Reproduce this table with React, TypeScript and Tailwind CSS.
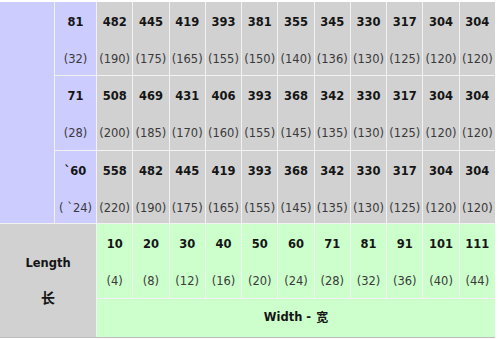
import React from 'react';

const rows = [
  { head: ['81', '(32)'], cells: [['482', '(190)'], ['445', '(175)'], ['419', '(165)'], ['393', '(155)'], ['381', '(150)'], ['355', '(140)'], ['345', '(136)'], ['330', '(130)'], ['317', '(125)'], ['304', '(120)'], ['304', '(120)']] },
  { head: ['71', '(28)'], cells: [['508', '(200)'], ['469', '(185)'], ['431', '(170)'], ['406', '(160)'], ['393', '(155)'], ['368', '(145)'], ['342', '(135)'], ['330', '(130)'], ['317', '(125)'], ['304', '(120)'], ['304', '(120)']] },
  { head: ['`60', '( `24)'], cells: [['558', '(220)'], ['482', '(190)'], ['445', '(175)'], ['419', '(165)'], ['393', '(155)'], ['368', '(145)'], ['342', '(135)'], ['330', '(130)'], ['317', '(125)'], ['304', '(120)'], ['304', '(120)']] },
];

const widths = [['10', '(4)'], ['20', '(8)'], ['30', '(12)'], ['40', '(16)'], ['50', '(20)'], ['60', '(24)'], ['71', '(28)'], ['81', '(32)'], ['91', '(36)'], ['101', '(40)'], ['111', '(44)']];

function Cell({ top, bottom, bg }: { top: string; bottom: string; bg: string }) {
  return (
    <div className={`${bg} flex flex-col items-center pt-[13px] gap-[23px] leading-[14px]`}>
      <span className="font-bold text-[11.5px] text-[#151515]">{top}</span>
      <span className="text-[11.5px] text-[#3a3a3a]">{bottom}</span>
    </div>
  );
}

export default function App() {
  return (
    <div className="w-[499px] h-[339px] bg-white pt-[2px] overflow-hidden" style={{ fontFamily: '"DejaVu Sans", "Noto Sans CJK SC", sans-serif' }}>
      <div className="w-[495px] grid grid-cols-[54px_41px_repeat(11,minmax(0,1fr))] grid-rows-[73px_74px_72px_74px_38px] gap-px bg-[#f2f2f2] border-b border-[#bdbdbd]">
        {/* blue spacer column on the left */}
        <div className="row-span-3 bg-[#ccccff]" />
        {rows.map((r, i) => (
          <React.Fragment key={i}>
            <Cell top={r.head[0]} bottom={r.head[1]} bg="bg-[#ccccff]" />
            {r.cells.map((c, j) => (
              <Cell key={j} top={c[0]} bottom={c[1]} bg="bg-[#d1d1d1]" />
            ))}
          </React.Fragment>
        ))}

        {/* length label */}
        <div className="col-span-2 row-span-2 bg-[#d1d1d1] flex flex-col items-center justify-center gap-[20px] leading-[15px] font-bold text-[11.5px] text-[#151515]">
          <span>Length</span>
          <span className="text-[14px]">长</span>
        </div>
        {widths.map((w, j) => (
          <Cell key={j} top={w[0]} bottom={w[1]} bg="bg-[#ccffcc]" />
        ))}
        <div className="col-span-11 bg-[#ccffcc] flex items-center justify-center font-bold text-[11.5px] text-[#151515]">
          Width - <span className="ml-[5px] text-[12px]">宽</span>
        </div>
      </div>
    </div>
  );
}
